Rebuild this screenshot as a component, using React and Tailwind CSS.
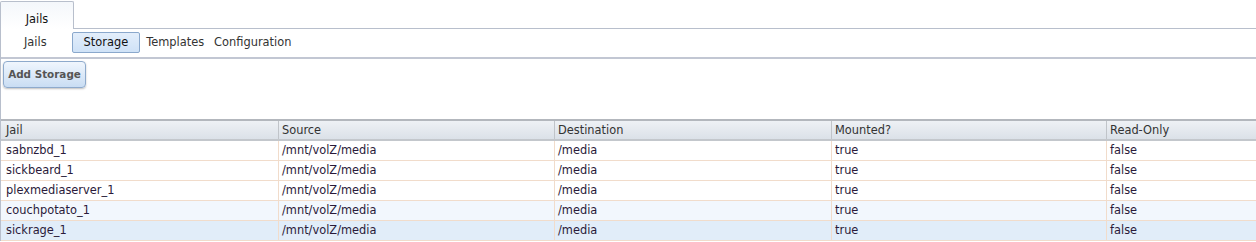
const rows = [
  { jail: 'sabnzbd_1', bg: 'bg-white' },
  { jail: 'sickbeard_1', bg: 'bg-white' },
  { jail: 'plexmediaserver_1', bg: 'bg-white' },
  { jail: 'couchpotato_1', bg: 'bg-[#f2f7fd]' },
  { jail: 'sickrage_1', bg: 'bg-[#e1edf9]' },
]

const cols = ['Jail', 'Source', 'Destination', 'Mounted?', 'Read-Only']

export default function App() {
  return (
    <div className="w-[1256px] h-[242px] bg-white overflow-hidden text-[11.4px] text-[#222]" style={{ fontFamily: '"DejaVu Sans", Verdana, sans-serif' }}>
      {/* top tabs */}
      <div className="flex h-[29px]">
        <div className="w-[74px] mt-px border-l border-t border-r border-[#b8bfcc] rounded-t-[2px] bg-gradient-to-b from-[#f4f7fb] to-white flex justify-center pt-[9px] text-[#111]">
          Jails
        </div>
        <div className="flex-1 border-b border-[#b8bfcc]"></div>
      </div>
      <div className="border-l border-[#b8bfcc]">
        {/* sub tabs */}
        <div className="flex items-center h-[30px] border-b-2 border-[#c2c7d3] pl-[23px] pb-[1px] text-[#333]">
          <span className="mr-[25px]">Jails</span>
          <span className="h-[21px] px-[11px] flex items-center border border-[#8aa8cc] rounded-[2px] bg-gradient-to-b from-[#e3eefb] to-[#cfe2f7] text-[#111] mr-[6px]">Storage</span>
          <span className="mr-[10px]">Templates</span>
          <span>Configuration</span>
        </div>
        <div className="h-[60px] pt-[2px] pl-[2px]">
          <button className="h-[27px] w-[83px] border border-[#8eaacc] rounded-[4px] bg-gradient-to-b from-[#f0f6fd] to-[#c9ddf3] shadow-[0_1px_2px_rgba(0,0,0,0.25)] text-[#555] font-bold text-[10.4px]">
            Add Storage
          </button>
        </div>
        {/* grid */}
        <div className="border-t-2 border-[#b3b7bd]">
          <div className="grid grid-cols-[277px_276px_277px_275px_1fr] h-[20px] bg-gradient-to-b from-[#eef1f5] to-[#dbe1e8] border-b-2 border-[#c3c7cc] text-[#333]">
            {cols.map((c, i) => (
              <div key={c} className={`flex items-center pt-px ${i > 0 ? 'border-l border-[#c0c4c9] pl-[3px]' : 'pl-[5px]'}`}>{c}</div>
            ))}
          </div>
          {rows.map((r) => (
            <div key={r.jail} className={`grid grid-cols-[277px_276px_277px_275px_1fr] h-[20px] border-b border-[#f1dccb] text-[#2a1a3a] ${r.bg}`}>
              {[r.jail, '/mnt/volZ/media', '/media', 'true', 'false'].map((v, i) => (
                <div key={i} className={`flex items-center pt-px ${i > 0 ? 'border-l border-[#f1dccb] pl-[3px]' : 'pl-[5px]'}`}>{v}</div>
              ))}
            </div>
          ))}
        </div>
      </div>
    </div>
  )
}
